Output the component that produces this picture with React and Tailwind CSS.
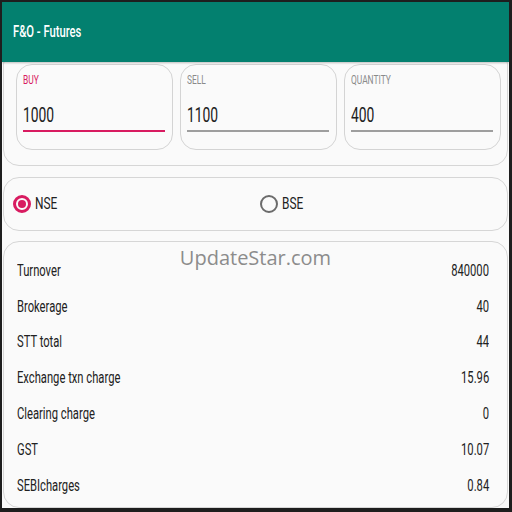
import React from "react";

const S = ({ children, className = "" }) => (
  <span className={"inline-block origin-left scale-x-[0.7] whitespace-nowrap " + className}>{children}</span>
);
const R = ({ children, className = "" }) => (
  <span className={"inline-block origin-right scale-x-[0.7] whitespace-nowrap " + className}>{children}</span>
);

function Field({ label, value, active }) {
  return (
    <div className="flex-1 h-[86px] rounded-[16px] border border-[#d4d4d4] bg-[#fafafa] px-[6px] pt-[7px] flex flex-col">
      <div className={"text-[12px] leading-[16px] " + (active ? "text-[#d81b60]" : "text-[#8a8a8a]")}>
        <S>{label}</S>
      </div>
      <div className="text-[21px] leading-[26px] text-[#212121] mt-[14px]">
        <span className="inline-block origin-left scale-x-[0.66] whitespace-nowrap">{value}</span>
      </div>
      <div className={"mt-[2px] mr-[1px] " + (active ? "h-[2px] bg-[#d81b60]" : "h-[2px] bg-[#9e9e9e]")} />
    </div>
  );
}

function Radio({ checked, label }) {
  return (
    <div className="flex items-center">
      <div
        className={
          "w-[18px] h-[18px] rounded-full flex items-center justify-center " +
          (checked ? "border-[3px] border-[#d81b60]" : "border-2 border-[#6b6b6b]")
        }
      >
        {checked && <div className="w-[8px] h-[8px] rounded-full bg-[#d81b60]" />}
      </div>
      <div className="ml-[4px] text-[17px] text-[#212121]">
        <S>{label}</S>
      </div>
    </div>
  );
}

const rows = [
  ["Turnover", "840000"],
  ["Brokerage", "40"],
  ["STT total", "44"],
  ["Exchange txn charge", "15.96"],
  ["Clearing charge", "0"],
  ["GST", "10.07"],
  ["SEBIcharges", "0.84"],
];

export default function App() {
  return (
    <div className="w-[512px] h-[512px] bg-[#1e1e1e] pt-[2px] pl-[2px] pr-[3px] pb-[4px]" style={{ fontFamily: "Roboto, 'Liberation Sans', sans-serif" }}>
      <div className="relative w-full h-full bg-[#fafafa] overflow-hidden flex flex-col">
        <div className="h-[60px] shrink-0 bg-[#03806f] flex items-center pl-[11px] relative z-10 shadow-[0_1px_2px_rgba(0,0,0,0.25)]">
          <div className="text-white text-[16px] font-medium">
            <S>F&amp;O - Futures</S>
          </div>
        </div>
        <div className="mx-[1px] -mt-[14px] pt-[15px] pb-[15px] pl-[12px] pr-[6px] rounded-[16px] border border-[#d6d6d6] flex gap-[7px]">
          <Field label="BUY" value="1000" active />
          <Field label="SELL" value="1100" />
          <Field label="QUANTITY" value="400" />
        </div>
        <div className="mx-[1px] mt-[11px] h-[54px] rounded-[16px] border border-[#d6d6d6] flex items-center pl-[9px]">
          <div className="w-[247px]">
            <Radio checked label="NSE" />
          </div>
          <Radio label="BSE" />
        </div>
        <div className="mx-[1px] mt-[10px] rounded-[16px] border border-[#d6d6d6] pt-[11px] pl-[13px] pr-[18px] flex-1">
          {rows.map(([l, v]) => (
            <div key={l} className="h-[35.8px] flex items-center justify-between text-[16px] text-[#212121]">
              <S>{l}</S>
              <R>{v}</R>
            </div>
          ))}
        </div>
        <div
          className="absolute left-0 right-0 top-[241px] text-center text-[20px] leading-[30px] text-[#8c8c8c]"
          style={{ fontFamily: "'Open Sans', sans-serif" }}
        >
          UpdateStar.com
        </div>
      </div>
    </div>
  );
}
